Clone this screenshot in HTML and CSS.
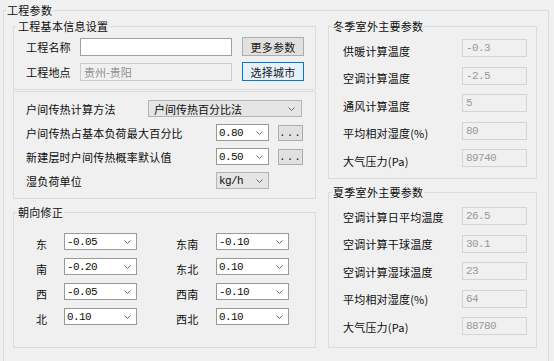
FILE: index.html
```html
<!DOCTYPE html>
<html lang="zh-CN">
<head>
    <meta charset="UTF-8">
    <title>工程参数</title>
    <link rel="stylesheet" href="styles.css">
</head>
<body>
    <div class="panel">
        <div class="panel-title">工程参数</div>
        <div class="panel-body">
            <div class="col-left">
                <div class="group basic">
                    <div class="group-title">工程基本信息设置</div>
                    <div class="rows">
                        <div class="row">
                            <span class="label w54">工程名称</span>
                            <input class="edit" type="text" value="">
                            <button class="btn">更多参数</button>
                        </div>
                        <div class="row">
                            <span class="label w54">工程地点</span>
                            <input class="edit disabled" type="text" value="贵州-贵阳" readonly>
                            <button class="btn default">选择城市</button>
                        </div>
                    </div>
                </div>

                <div class="group method">
                    <div class="rows">
                        <div class="row">
                            <span class="label w122">户间传热计算方法</span>
                            <div class="combo ro wide"><span>户间传热百分比法</span><svg width="7" height="4" viewBox="0 0 7 4"><path d="M0.5 0.5 L3.5 3.5 L6.5 0.5" fill="none" stroke="#666"/></svg></div>
                        </div>
                        <div class="row">
                            <span class="label w190">户间传热占基本负荷最大百分比</span>
                            <div class="combo num small"><span>0.80</span><svg width="7" height="4" viewBox="0 0 7 4"><path d="M0.5 0.5 L3.5 3.5 L6.5 0.5" fill="none" stroke="#666"/></svg></div>
                            <button class="btn dots">...</button>
                        </div>
                        <div class="row">
                            <span class="label w190">新建层时户间传热概率默认值</span>
                            <div class="combo num small"><span>0.50</span><svg width="7" height="4" viewBox="0 0 7 4"><path d="M0.5 0.5 L3.5 3.5 L6.5 0.5" fill="none" stroke="#666"/></svg></div>
                            <button class="btn dots">...</button>
                        </div>
                        <div class="row">
                            <span class="label w190">湿负荷单位</span>
                            <div class="combo num ro small"><span>kg/h</span><svg width="7" height="4" viewBox="0 0 7 4"><path d="M0.5 0.5 L3.5 3.5 L6.5 0.5" fill="none" stroke="#666"/></svg></div>
                        </div>
                    </div>
                </div>

                <div class="group orient">
                    <div class="group-title">朝向修正</div>
                    <div class="rows">
                        <div class="row">
                            <span class="label dir1">东</span>
                            <div class="combo num dirbox"><span>-0.05</span><svg width="7" height="4" viewBox="0 0 7 4"><path d="M0.5 0.5 L3.5 3.5 L6.5 0.5" fill="none" stroke="#666"/></svg></div>
                            <span class="label dir2">东南</span>
                            <div class="combo num dirbox"><span>-0.10</span><svg width="7" height="4" viewBox="0 0 7 4"><path d="M0.5 0.5 L3.5 3.5 L6.5 0.5" fill="none" stroke="#666"/></svg></div>
                        </div>
                        <div class="row">
                            <span class="label dir1">南</span>
                            <div class="combo num dirbox"><span>-0.20</span><svg width="7" height="4" viewBox="0 0 7 4"><path d="M0.5 0.5 L3.5 3.5 L6.5 0.5" fill="none" stroke="#666"/></svg></div>
                            <span class="label dir2">东北</span>
                            <div class="combo num dirbox"><span>0.10</span><svg width="7" height="4" viewBox="0 0 7 4"><path d="M0.5 0.5 L3.5 3.5 L6.5 0.5" fill="none" stroke="#666"/></svg></div>
                        </div>
                        <div class="row">
                            <span class="label dir1">西</span>
                            <div class="combo num dirbox"><span>-0.05</span><svg width="7" height="4" viewBox="0 0 7 4"><path d="M0.5 0.5 L3.5 3.5 L6.5 0.5" fill="none" stroke="#666"/></svg></div>
                            <span class="label dir2">西南</span>
                            <div class="combo num dirbox"><span>-0.10</span><svg width="7" height="4" viewBox="0 0 7 4"><path d="M0.5 0.5 L3.5 3.5 L6.5 0.5" fill="none" stroke="#666"/></svg></div>
                        </div>
                        <div class="row">
                            <span class="label dir1">北</span>
                            <div class="combo num dirbox"><span>0.10</span><svg width="7" height="4" viewBox="0 0 7 4"><path d="M0.5 0.5 L3.5 3.5 L6.5 0.5" fill="none" stroke="#666"/></svg></div>
                            <span class="label dir2">西北</span>
                            <div class="combo num dirbox"><span>0.10</span><svg width="7" height="4" viewBox="0 0 7 4"><path d="M0.5 0.5 L3.5 3.5 L6.5 0.5" fill="none" stroke="#666"/></svg></div>
                        </div>
                    </div>
                </div>
            </div>

            <div class="col-right">
                <div class="group winter">
                    <div class="group-title">冬季室外主要参数</div>
                    <div class="rows">
                        <div class="row"><span class="label w119">供暖计算温度</span><input class="value" type="text" value="-0.3" readonly></div>
                        <div class="row"><span class="label w119">空调计算温度</span><input class="value" type="text" value="-2.5" readonly></div>
                        <div class="row"><span class="label w119">通风计算温度</span><input class="value" type="text" value="5" readonly></div>
                        <div class="row"><span class="label w119">平均相对湿度(%)</span><input class="value" type="text" value="80" readonly></div>
                        <div class="row"><span class="label w119">大气压力(Pa)</span><input class="value" type="text" value="89740" readonly></div>
                    </div>
                </div>

                <div class="group summer">
                    <div class="group-title">夏季室外主要参数</div>
                    <div class="rows">
                        <div class="row"><span class="label w119">空调计算日平均温度</span><input class="value" type="text" value="26.5" readonly></div>
                        <div class="row"><span class="label w119">空调计算干球温度</span><input class="value" type="text" value="30.1" readonly></div>
                        <div class="row"><span class="label w119">空调计算湿球温度</span><input class="value" type="text" value="23" readonly></div>
                        <div class="row"><span class="label w119">平均相对湿度(%)</span><input class="value" type="text" value="64" readonly></div>
                        <div class="row"><span class="label w119">大气压力(Pa)</span><input class="value" type="text" value="88780" readonly></div>
                    </div>
                </div>
            </div>
        </div>
    </div>
</body>
</html>
```

FILE: styles.css
```css
body {
    margin: 0;
    background-color: #f0f0f0;
    font-family: "Noto Sans CJK SC", "Noto Sans", sans-serif;
    font-size: 11px;
    line-height: 14px;
    color: #0d0d0d;
    overflow: hidden;
}
.panel {
    margin: 10px 0 0 3px;
    width: 546px;
    height: 358px;
    box-sizing: border-box;
    border: 1px solid #dcdcdc;
    display: flex;
    flex-direction: column;
}
.panel-title,
.group-title {
    align-self: flex-start;
    height: 14px;
    margin: -8px 0 0 3px;
    padding: 0 1px;
    background-color: #f0f0f0;
    letter-spacing: 0.3px;
}
.panel-title {
    margin-left: 2px;
}
.panel-body {
    display: flex;
    gap: 12px;
    padding-left: 9px;
    margin-top: 9px;
}
.col-left {
    width: 303px;
    display: flex;
    flex-direction: column;
}
.col-right {
    width: 209px;
    display: flex;
    flex-direction: column;
}
.group {
    border: 1px solid #dcdcdc;
    box-sizing: border-box;
    display: flex;
    flex-direction: column;
}
.basic { height: 64px; }
.method { height: 108px; margin-top: 1px; }
.orient { height: 136px; margin-top: 13px; }
.winter { height: 153px; }
.summer { height: 156px; margin-top: 13px; }

.rows {
    display: flex;
    flex-direction: column;
    padding-left: 12px;
}
.row {
    display: flex;
    align-items: center;
}
.basic .rows { margin-top: 4px; gap: 6px; }
.basic .row { height: 19px; }
.method .rows { margin-top: 8px; gap: 7px; }
.method .row { height: 17px; }
.orient .rows { margin-top: 14px; gap: 8px; padding-left: 22px; }
.orient .row { height: 17px; }
.winter .rows { margin-top: 6px; gap: 9.5px; padding-left: 14px; }
.summer .rows { margin-top: 8px; gap: 9.5px; padding-left: 14px; }
.winter .row,
.summer .row { height: 18px; }

.label {
    flex: none;
    letter-spacing: 0.2px;
    white-space: nowrap;
}
.winter .label { margin-top: 5px; }
.summer .label { margin-top: 1px; }
.orient .label { margin-top: 5px; }
.w54 { width: 54px; }
.w122 { width: 122px; }
.w190 { width: 190px; }
.w119 { width: 119px; }
.dir1 { width: 28px; }
.dir2 { width: 40px; margin-left: 39px; }

input {
    font: inherit;
    box-sizing: border-box;
    margin: 0;
    outline: none;
}
.edit {
    width: 152px;
    height: 18px;
    border: 1px solid #a0a0a0;
    background-color: #fff;
    padding: 0 3px;
    color: #1a1a1a;
}
.edit.disabled {
    background-color: #f0f0f0;
    border-color: #cccccc;
    color: #8e8e8e;
}
.value {
    width: 65px;
    height: 18px;
    border: 1px solid #d4d4d4;
    background-color: #f0f0f0;
    color: #999;
    padding: 0 3px;
    font-family: "Liberation Mono", monospace;
    letter-spacing: -0.6px;
}
.btn {
    font: inherit;
    margin: 0 0 0 10px;
    padding: 0;
    width: 62px;
    height: 19px;
    border: 1px solid #adadad;
    background-color: #e1e1e1;
    color: #1a1a1a;
    letter-spacing: 0.3px;
}
.btn.default {
    border-color: #0078d7;
    background-color: #e5f1fb;
}
.btn.dots {
    width: 25px;
    height: 16px;
    margin-left: 9px;
    font-family: "Liberation Mono", monospace;
    letter-spacing: 1px;
    line-height: 12px;
}
.combo {
    display: flex;
    align-items: center;
    justify-content: space-between;
    box-sizing: border-box;
    height: 17px;
    border: 1px solid #9a9a9a;
    background-color: #fff;
    padding: 0 5px 0 2px;
}
.combo svg {
    flex: none;
}
.combo.ro {
    background-color: #e5e5e5;
    border-color: #b4b4b4;
}
.combo.wide {
    width: 154px;
    padding-left: 5px;
    padding-right: 6px;
}
.combo.small { width: 53px; }
.combo.dirbox { width: 73px; }
.num span {
    font-family: "Liberation Mono", monospace;
    letter-spacing: -0.6px;
}
```
